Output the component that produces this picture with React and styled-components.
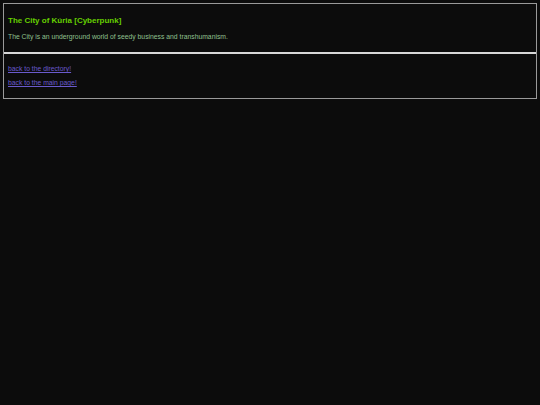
import React from 'react';
import styled, { createGlobalStyle } from 'styled-components';

const GlobalStyle = createGlobalStyle`
  html, body {
    margin: 0;
    padding: 0;
    background-color: #0c0c0c;
    font-family: "Liberation Sans", Arial, sans-serif;
    -webkit-font-smoothing: antialiased;
  }
`;

const Page = styled.div`
  padding: 3px;
  min-height: 405px;
  box-sizing: border-box;
`;

const Frame = styled.div`
  border: 1px solid #9a9a9a;
  display: flex;
  flex-direction: column;
`;

const Section = styled.div`
  padding: ${(p) => (p.$divider ? '9px 4px 9px 4px' : '10px 4px 6px 4px')};
  border-bottom: ${(p) => (p.$divider ? '2px solid #d8d8d8' : 'none')};
`;

const Title = styled.h1`
  margin: 2px 0 0 0;
  font-size: 8px;
  font-weight: bold;
  color: #66d000;
  line-height: 12px;
`;

const Blurb = styled.p`
  margin: 4px 0 0 0;
  font-size: 6.8px;
  color: #8fc08f;
  line-height: 12px;
`;

const NavLink = styled.a`
  display: block;
  font-size: 6.8px;
  line-height: 10px;
  color: #6a5acd;
  text-decoration: underline;
  margin: 0 0 4px 0;
`;

const links = [
  { label: 'back to the directory!', href: '#directory' },
  { label: 'back to the main page!', href: '#main' },
];

export default function App() {
  return (
    <>
      <GlobalStyle />
      <Page>
        <Frame>
          <Section $divider>
            <Title>The City of Kúria [Cyberpunk]</Title>
            <Blurb>The City is an underground world of seedy business and transhumanism.</Blurb>
          </Section>
          <Section>
            {links.map((link) => (
              <NavLink key={link.href} href={link.href}>
                {link.label}
              </NavLink>
            ))}
          </Section>
        </Frame>
      </Page>
    </>
  );
}
